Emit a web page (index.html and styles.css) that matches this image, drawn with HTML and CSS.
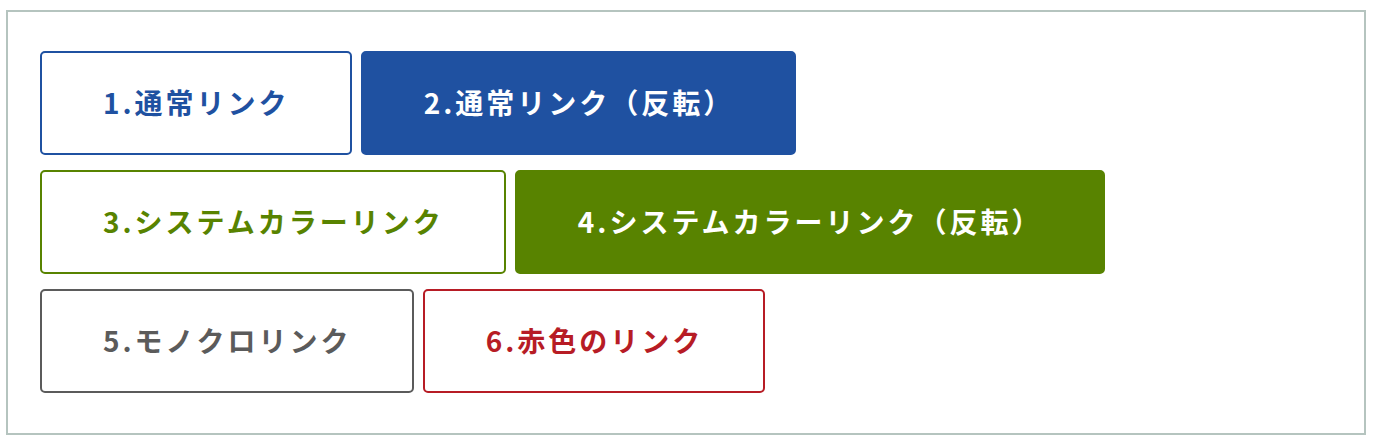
FILE: index.html
```html
<!DOCTYPE html>
<html lang="ja">
<head>
  <meta charset="UTF-8">
  <meta name="viewport" content="width=device-width, initial-scale=1.0">
  <title>リンクボタン</title>
  <link rel="stylesheet" href="styles.css">
</head>
<body>
  <div class="panel">
    <div class="row">
      <a href="#" class="btn btn-blue">1.通常リンク</a>
      <a href="#" class="btn btn-blue filled">2.通常リンク（反転）</a>
    </div>
    <div class="row">
      <a href="#" class="btn btn-green">3.システムカラーリンク</a>
      <a href="#" class="btn btn-green filled">4.システムカラーリンク（反転）</a>
    </div>
    <div class="row">
      <a href="#" class="btn btn-mono">5.モノクロリンク</a>
      <a href="#" class="btn btn-red">6.赤色のリンク</a>
    </div>
  </div>
</body>
</html>
```

FILE: styles.css
```css
body {
  font-family: "Noto Sans CJK JP", "Noto Sans", sans-serif;
  margin: 0;
  padding: 0;
  background-color: #fff;
}
.panel {
  margin: 10px 8px 0 6px;
  padding: 39px 32px 40px;
  border: 2px solid #b5c4bf;
  display: flex;
  flex-direction: column;
  gap: 15px;
}
.row {
  display: flex;
  gap: 9px;
}
.btn {
  display: block;
  box-sizing: border-box;
  height: 104px;
  padding: 0 60px 0 61px;
  border: 2px solid;
  border-radius: 5px;
  font-size: 28px;
  font-weight: bold;
  letter-spacing: 3px;
  line-height: 98px;
  text-align: center;
  text-decoration: none;
  background-color: #fff;
}
.btn-blue {
  color: #1f51a1;
  border-color: #1f51a1;
}
.btn-green {
  color: #588300;
  border-color: #588300;
}
.btn-mono {
  color: #5b5b5b;
  border-color: #5b5b5b;
}
.btn-red {
  color: #b71c25;
  border-color: #b71c25;
}
.btn-blue.filled {
  color: #fff;
  background-color: #1f51a1;
}
.btn-green.filled {
  color: #fff;
  background-color: #588300;
}
```
